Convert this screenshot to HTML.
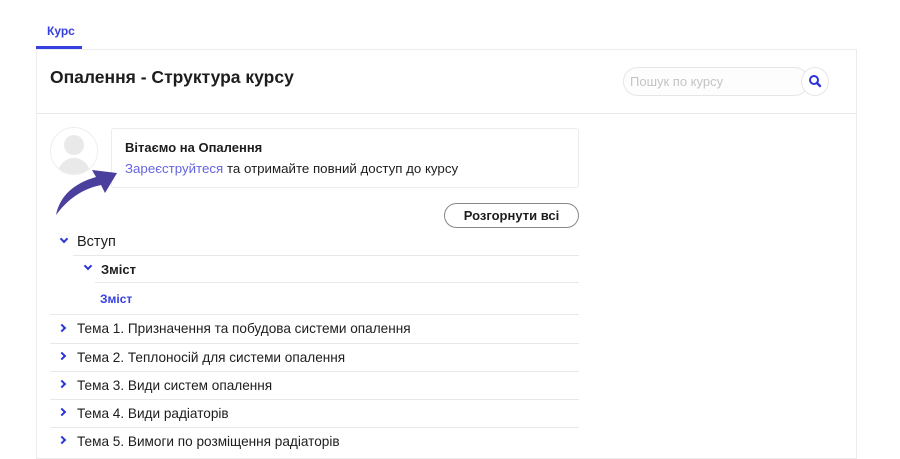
<!DOCTYPE html>
<html><head><meta charset="utf-8"><style>
*{margin:0;padding:0;box-sizing:border-box}
body{width:900px;height:446px;background:#fff;font-family:"Liberation Sans",sans-serif;color:#1d1d1d;position:relative;overflow:hidden}
.a{position:absolute}
.t{white-space:nowrap}
.line{position:absolute;height:1px;background:#e8e8e8}
.chev{position:absolute;width:6px;height:6px;border-right:2px solid #2b35d6;border-bottom:2px solid #2b35d6}
.row{position:absolute;left:77px;font-size:13.6px;white-space:nowrap}
</style></head><body>
<div class="a t" style="left:47px;top:24px;font-size:12px;color:#3640e0;font-weight:bold">Курс</div>
<div class="a" style="left:36px;top:46px;width:46px;height:3px;background:#3640e0"></div>
<div class="a" style="left:36px;top:49px;width:821px;height:410px;border:1px solid #ececec"></div>
<div class="line" style="left:37px;top:113px;width:819px"></div>
<div class="a t" style="left:50px;top:67px;font-size:17.5px;font-weight:bold">Опалення - Структура курсу</div>
<div class="a" style="left:623px;top:67px;width:186px;height:29px;border:1px solid #e6e6e6;border-radius:15px;background:#fdfdfd"></div>
<div class="a t" style="left:630px;top:74px;font-size:13px;color:#c4c4c4">Пошук по курсу</div>
<div class="a" style="left:801px;top:67px;width:28px;height:29px;border:1px solid #e6e6e6;border-radius:50%;background:#fff"></div>
<svg class="a" style="left:808px;top:74px" width="14" height="14" viewBox="0 0 14 14"><circle cx="6" cy="6" r="4" fill="none" stroke="#2b35d6" stroke-width="2"/><path d="M9 9L12 12" stroke="#2b35d6" stroke-width="2.4" stroke-linecap="round"/></svg>
<div class="a" style="left:50px;top:127px;width:48px;height:48px;border:1px solid #eee;border-radius:50%;overflow:hidden;background:#fff">
<div class="a" style="left:13px;top:7px;width:20px;height:20px;border-radius:50%;background:#e9e9e9"></div>
<div class="a" style="left:7px;top:30px;width:32px;height:24px;border-radius:16px 16px 0 0;background:#e9e9e9"></div></div>
<div class="a" style="left:111px;top:128px;width:468px;height:60px;border:1px solid #ececec;border-radius:3px"></div>
<div class="a t" style="left:125px;top:140px;font-size:13px;font-weight:bold">Вітаємо на Опалення</div>
<div class="a t" style="left:125px;top:161px;font-size:13.3px"><span style="color:#6565e0">Зареєструйтеся</span> та отримайте повний доступ до курсу</div>
<svg class="a" style="left:50px;top:165px" width="70" height="52" viewBox="0 0 70 52"><path d="M6 50C10 30 25 18 46 12L42 5L67 8L55 28L51 20C32 24 18 34 6 50Z" fill="#4b3f9e"/></svg>
<div class="a t" style="left:444px;top:203px;width:135px;height:25px;border:1px solid #888;border-radius:13px;font-size:13px;font-weight:bold;text-align:center;line-height:23px">Розгорнути всі</div>
<div class="chev" style="left:61px;top:236px;transform:rotate(45deg)"></div>
<div class="row" style="top:234px;font-size:14.5px">Вступ</div>
<div class="line" style="left:73px;top:255px;width:506px"></div>
<div class="chev" style="left:85px;top:263px;transform:rotate(45deg)"></div>
<div class="row" style="left:101px;top:262px;font-size:13px;font-weight:bold">Зміст</div>
<div class="line" style="left:95px;top:282px;width:484px"></div>
<div class="row" style="left:100px;top:292px;font-size:12px;font-weight:bold;color:#3640e0">Зміст</div>
<div class="line" style="left:50px;top:314px;width:529px"></div>
<div class="chev" style="left:59px;top:325px;transform:rotate(-45deg)"></div>
<div class="row" style="top:321px">Тема 1. Призначення та побудова системи опалення</div>
<div class="line" style="left:50px;top:343px;width:529px"></div>
<div class="chev" style="left:59px;top:353px;transform:rotate(-45deg)"></div>
<div class="row" style="top:350px">Тема 2. Теплоносій для системи опалення</div>
<div class="line" style="left:50px;top:371px;width:529px"></div>
<div class="chev" style="left:59px;top:381px;transform:rotate(-45deg)"></div>
<div class="row" style="top:378px">Тема 3. Види систем опалення</div>
<div class="line" style="left:50px;top:399px;width:529px"></div>
<div class="chev" style="left:59px;top:409px;transform:rotate(-45deg)"></div>
<div class="row" style="top:406px">Тема 4. Види радіаторів</div>
<div class="line" style="left:50px;top:427px;width:529px"></div>
<div class="chev" style="left:59px;top:437px;transform:rotate(-45deg)"></div>
<div class="row" style="top:434px">Тема 5. Вимоги по розміщення радіаторів</div>
</body></html>
